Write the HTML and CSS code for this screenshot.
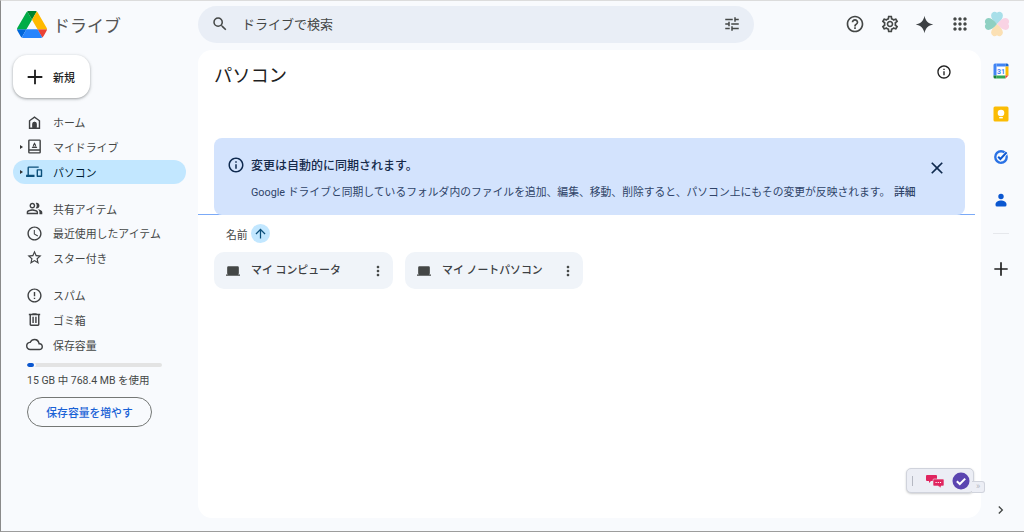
FILE: index.html
```html
<!DOCTYPE html>
<html lang="ja">
<head>
<meta charset="utf-8">
<title>ドライブ</title>
<link rel="stylesheet" href="styles.css">
</head>
<body>
<div class="app">
  <header class="topbar">
    <div class="brand">
      <svg class="logo" viewBox="0 0 87.3 78" width="30" height="27"><path d="m6.6 66.85 3.85 6.65c.8 1.4 1.95 2.5 3.3 3.3l13.75-23.8h-27.5c0 1.55.4 3.1 1.2 4.5z" fill="#0066da"/><path d="m43.65 25-13.75-23.8c-1.35.8-2.5 1.9-3.3 3.3l-25.4 44a9.06 9.06 0 0 0 -1.2 4.5h27.5z" fill="#00ac47"/><path d="m73.55 76.8c1.35-.8 2.5-1.9 3.3-3.3l1.6-2.75 7.65-13.25c.8-1.4 1.2-2.95 1.2-4.5h-27.5l5.85 11.5z" fill="#ea4335"/><path d="m43.65 25 13.75-23.8c-1.35-.8-2.9-1.2-4.5-1.2h-18.5c-1.6 0-3.15.45-4.5 1.2z" fill="#00832d"/><path d="m59.8 53h-32.3l-13.75 23.8c1.35.8 2.9 1.2 4.5 1.2h50.8c1.6 0 3.15-.45 4.5-1.2z" fill="#2684fc"/><path d="m73.4 26.5-12.7-22c-.8-1.4-1.95-2.5-3.3-3.3l-13.75 23.8 16.15 28h27.45c0-1.55-.4-3.1-1.2-4.5z" fill="#ffba00"/></svg>
      <span class="brand-name">ドライブ</span>
    </div>
    <div class="search">
      <svg class="ic18" viewBox="0 0 24 24"><path d="M15.5 14h-.79l-.28-.27A6.47 6.47 0 0 0 16 9.5 6.5 6.5 0 1 0 9.5 16c1.61 0 3.09-.59 4.23-1.57l.27.28v.79l5 4.99L20.49 19l-4.99-5zm-6 0C7.01 14 5 11.99 5 9.5S7.01 5 9.5 5 14 7.01 14 9.5 11.99 14 9.5 14z"/></svg>
      <span class="search-text">ドライブで検索</span>
      <svg class="ic18 tune" viewBox="0 0 24 24"><path d="M3 17v2h6v-2H3zM3 5v2h10V5H3zm10 16v-2h8v-2h-8v-2h-2v6h2zM7 9v2H3v2h4v2h2V9H7zm14 4v-2H11v2h10zm-6-4h2V7h4V5h-4V3h-2v6z"/></svg>
    </div>
    <div class="top-actions">
      <svg class="ic20" viewBox="0 0 24 24"><path d="M11 18h2v-2h-2v2zm1-16C6.48 2 2 6.48 2 12s4.48 10 10 10 10-4.480 10-10S17.520 2 12 2zm0 18c-4.410 0-8-3.590-8-8s3.590-8 8-8 8 3.590 8 8-3.590 8-8 8zm0-14c-2.210 0-4 1.790-4 4h2c0-1.100.9-2 2-2s2 .9 2 2c0 2-3 1.750-3 5h2c0-2.250 3-2.500 3-5 0-2.210-1.790-4-4-4z"/></svg>
      <svg class="ic20" viewBox="0 0 24 24"><path d="M19.43 12.98c.04-.32.07-.64.07-.98s-.03-.66-.07-.98l2.110-1.650c.19-.15.24-.42.12-.64l-2-3.460c-.12-.22-.39-.3-.61-.22l-2.490 1c-.52-.4-1.080-.73-1.690-.98l-.38-2.650A.49.49 0 0 0 14 2h-4c-.25 0-.46.18-.49.42l-.38 2.650c-.61.25-1.170.59-1.690.98l-2.490-1c-.23-.09-.49 0-.61.22l-2 3.460c-.13.22-.07.49.12.64l2.110 1.650c-.04.32-.07.65-.07.98s.03.66.07.98l-2.110 1.650c-.19.15-.24.42-.12.64l2 3.460c.12.22.39.3.61.22l2.490-1c.52.4 1.080.73 1.690.98l.38 2.650c.03.24.24.42.49.42h4c.25 0 .46-.18.49-.42l.38-2.650c.61-.25 1.170-.59 1.690-.98l2.490 1c.23.09.49 0 .61-.22l2-3.460c.12-.22.07-.49-.12-.64l-2.110-1.650zM17.450 11.270c.04.31.05.52.05.73s-.02.43-.05.73l-.14 1.130.89.7 1.080.84-.7 1.210-1.270-.51-1.040-.42-.9.68c-.43.32-.84.56-1.250.73l-1.060.43-.16 1.130-.2 1.350h-1.400l-.19-1.350-.16-1.130-1.060-.43c-.43-.18-.83-.41-1.230-.71l-.91-.7-1.060.43-1.270.51-.7-1.210 1.080-.84.89-.7-.14-1.130c-.03-.31-.05-.54-.05-.74s.02-.43.05-.73l.14-1.130-.89-.7-1.080-.84.7-1.210 1.270.51 1.040.42.9-.68c.43-.32.84-.56 1.250-.73l1.060-.43.16-1.130.2-1.350h1.390l.19 1.350.16 1.130 1.060.43c.43.18.83.41 1.230.71l.91.7 1.060-.43 1.270-.51.7 1.210-1.070.85-.89.7.14 1.130zM12 8c-2.210 0-4 1.790-4 4s1.790 4 4 4 4-1.790 4-4-1.790-4-4-4zm0 6c-1.100 0-2-.9-2-2s.9-2 2-2 2 .9 2 2-.9 2-2 2z"/></svg>
      <svg class="ic20 gem" viewBox="0 0 24 24"><path d="M12 2c.9 5.600 4.400 9.100 10 10-5.600.9-9.100 4.400-10 10-.9-5.600-4.400-9.100-10-10 5.600-.9 9.100-4.400 10-10z"/></svg>
      <svg class="ic20" viewBox="0 0 24 24"><path d="M6 8c1.100 0 2-.9 2-2s-.9-2-2-2-2 .9-2 2 .9 2 2 2zm6 12c1.100 0 2-.9 2-2s-.9-2-2-2-2 .9-2 2 .9 2 2 2zm-6 0c1.100 0 2-.9 2-2s-.9-2-2-2-2 .9-2 2 .9 2 2 2zm0-6c1.100 0 2-.9 2-2s-.9-2-2-2-2 .9-2 2 .9 2 2 2zm6 0c1.100 0 2-.9 2-2s-.9-2-2-2-2 .9-2 2 .9 2 2 2zm4-8c0 1.100.9 2 2 2s2-.9 2-2-.9-2-2-2-2 .9-2 2zm-4 2c1.100 0 2-.9 2-2s-.9-2-2-2-2 .9-2 2 .9 2 2 2zm6 6c1.100 0 2-.9 2-2s-.9-2-2-2-2 .9-2 2 .9 2 2 2zm0 6c1.100 0 2-.9 2-2s-.9-2-2-2-2 .9-2 2 .9 2 2 2z"/></svg>
      <svg class="avatar" viewBox="2 2 22 22" width="26" height="26"><path d="M13 13C9.500 10 8 8 8 5.500A3 3 0 0 1 13 3.500 3 3 0 0 1 18 5.500C18 8 16.500 10 13 13z" fill="#a8dfe9"/><path d="M13 13C9.500 10 8 8 8 5.500A3 3 0 0 1 13 3.500 3 3 0 0 1 18 5.500C18 8 16.500 10 13 13z" fill="#f9d3e4" transform="rotate(90 13 13)"/><path d="M13 13C9.500 10 8 8 8 5.500A3 3 0 0 1 13 3.500 3 3 0 0 1 18 5.500C18 8 16.500 10 13 13z" fill="#fbe0b4" transform="rotate(180 13 13)"/><path d="M13 13C9.500 10 8 8 8 5.500A3 3 0 0 1 13 3.500 3 3 0 0 1 18 5.500C18 8 16.500 10 13 13z" fill="#8fd0c2" transform="rotate(270 13 13)"/></svg>
    </div>
  </header>

  <div class="body">
    <aside class="sidebar">
      <button class="new-btn">
        <svg class="ic22" viewBox="0 0 24 24"><path d="M20 13h-7v7h-2v-7H4v-2h7V4h2v7h7z"/></svg>
        <span>新規</span>
      </button>
      <nav class="nav-group first">
        <div class="nav-item"><svg viewBox="0 0 24 24"><path fill-rule="evenodd" d="M12 3 4 9v12h16V9l-8-6zm6 16h-3v-5a3 3 0 0 0-6 0v5H6v-9l6-4.500 6 4.500v9z"/><path d="M9 14a3 3 0 0 1 6 0v5H9z"/></svg><span>ホーム</span></div>
        <div class="nav-item"><i class="caret"></i><svg viewBox="0 0 24 24"><path d="M19 2H5a2 2 0 0 0-2 2v16a2 2 0 0 0 2 2h14a2 2 0 0 0 2-2V4a2 2 0 0 0-2-2zm0 18H5v-2h14v2zm0-4H5V4h14v12zM8 14h8l-1.200-2H9.200L8 14zm4-8-2.400 4.200 1 1.800L12 9.500l1.400 2.500 1-1.800L12 6z"/></svg><span>マイドライブ</span></div>
        <div class="nav-item active"><i class="caret"></i><svg class="pc" viewBox="0 0 24 20"><path d="M4 4h14V2H4a2 2 0 0 0-2 2v10H0v3h12v-3H4V4zm18 2h-6a1 1 0 0 0-1 1v9a1 1 0 0 0 1 1h6a1 1 0 0 0 1-1V7a1 1 0 0 0-1-1zm-1 9h-4V8h4v7z"/></svg><span>パソコン</span></div>
      </nav>
      <nav class="nav-group shared">
        <div class="nav-item"><svg viewBox="0 0 24 24"><path d="M16.670 13.130C18.040 14.060 19 15.320 19 17v3h4v-3c0-2.180-3.570-3.470-6.330-3.870zM15 12c2.210 0 4-1.790 4-4s-1.790-4-4-4c-.47 0-.91.1-1.330.24a5.980 5.980 0 0 1 0 7.520c.42.14.86.24 1.330.24zM9 12c2.210 0 4-1.790 4-4s-1.790-4-4-4-4 1.790-4 4 1.790 4 4 4zm0-6c1.100 0 2 .9 2 2s-.9 2-2 2-2-.9-2-2 .9-2 2-2zM9 13c-2.670 0-8 1.340-8 4v3h16v-3c0-2.660-5.330-4-8-4zm6 5H3v-.99C3.200 16.290 6.300 15 9 15s5.800 1.290 6 2v1z"/></svg><span>共有アイテム</span></div>
        <div class="nav-item"><svg viewBox="0 0 24 24"><path d="M11.990 2C6.470 2 2 6.480 2 12s4.470 10 9.990 10C17.520 22 22 17.520 22 12S17.520 2 11.990 2zM12 20c-4.420 0-8-3.580-8-8s3.580-8 8-8 8 3.580 8 8-3.580 8-8 8zm.5-13H11v6l5.250 3.150.75-1.230-4.500-2.670V7z"/></svg><span>最近使用したアイテム</span></div>
        <div class="nav-item"><svg viewBox="0 0 24 24"><path d="m22 9.240-7.190-.62L12 2 9.190 8.630 2 9.240l5.460 4.730L5.820 21 12 17.270 18.180 21l-1.630-7.030L22 9.240zM12 15.400l-3.760 2.270 1-4.280-3.320-2.880 4.380-.38L12 6.100l1.710 4.040 4.380.38-3.320 2.880 1 4.280L12 15.400z"/></svg><span>スター付き</span></div>
      </nav>
      <nav class="nav-group">
        <div class="nav-item"><svg viewBox="0 0 24 24"><path d="M11 15h2v2h-2zm0-8h2v6h-2zm.99-5C6.470 2 2 6.480 2 12s4.470 10 9.990 10C17.520 22 22 17.520 22 12S17.520 2 11.990 2zM12 20c-4.420 0-8-3.580-8-8s3.580-8 8-8 8 3.580 8 8-3.580 8-8 8z"/></svg><span>スパム</span></div>
        <div class="nav-item"><svg viewBox="0 0 24 24"><path d="M15 4V3H9v1H4v2h1v13c0 1.100.9 2 2 2h10c1.100 0 2-.9 2-2V6h1V4h-5zm2 15H7V6h10v13zM9 8h2v9H9zm4 0h2v9h-2z"/></svg><span>ゴミ箱</span></div>
        <div class="nav-item"><svg viewBox="0 0 24 24"><path d="M19.350 10.040A7.490 7.490 0 0 0 12 4C9.110 4 6.600 5.640 5.350 8.040A5.994 5.994 0 0 0 0 14c0 3.310 2.690 6 6 6h13c2.760 0 5-2.240 5-5 0-2.640-2.050-4.780-4.650-4.960zM19 18H6c-2.210 0-4-1.790-4-4 0-2.050 1.530-3.760 3.560-3.970l1.070-.11.500-.95A5.469 5.469 0 0 1 12 6c2.620 0 4.880 1.860 5.390 4.430l.3 1.500 1.530.11A2.980 2.980 0 0 1 22 15c0 1.650-1.350 3-3 3z"/></svg><span>保存容量</span></div>
      </nav>
      <div class="storage">
        <div class="storage-track"><div class="storage-fill" style="width:7px"></div></div>
        <div class="storage-text">15 GB 中 768.4 MB を使用</div>
        <button class="more-btn">保存容量を増やす</button>
      </div>
    </aside>

    <main class="panel">
      <div class="panel-head">
        <h1>パソコン</h1>
        <svg class="ic16" viewBox="0 0 24 24"><path d="M11 7h2v2h-2zm0 4h2v6h-2zm1-9C6.480 2 2 6.480 2 12s4.480 10 10 10 10-4.480 10-10S17.520 2 12 2zm0 18c-4.410 0-8-3.590-8-8s3.590-8 8-8 8 3.590 8 8-3.590 8-8 8z"/></svg>
      </div>
      <div class="banner-wrap">
        <section class="banner">
          <div class="banner-title">
            <svg class="ic18 navy" viewBox="0 0 24 24"><path d="M11 7h2v2h-2zm0 4h2v6h-2zm1-9C6.480 2 2 6.480 2 12s4.480 10 10 10 10-4.480 10-10S17.520 2 12 2zm0 18c-4.410 0-8-3.590-8-8s3.590-8 8-8 8 3.590 8 8-3.590 8-8 8z"/></svg>
            <strong>変更は自動的に同期されます。</strong>
            <svg class="ic20 navy close" viewBox="0 0 24 24"><path d="M19 6.410 17.590 5 12 10.590 6.410 5 5 6.410 10.590 12 5 17.590 6.410 19 12 13.410 17.590 19 19 17.590 13.410 12z"/></svg>
          </div>
          <p>Google ドライブと同期しているフォルダ内のファイルを追加、編集、移動、削除すると、パソコン上にもその変更が反映されます。 <span class="detail">詳細</span></p>
        </section>
      </div>
      <div class="sort">
        <span>名前</span>
        <span class="sort-btn"><svg viewBox="0 0 24 24" width="15" height="15"><path d="M4 12l1.410 1.410L11 7.830V20h2V7.830l5.580 5.590L20 12l-8-8-8 8z"/></svg></span>
      </div>
      <div class="cards">
        <div class="card card-a">
          <svg class="ic14" viewBox="0 0 24 24"><path d="M20 18a2 2 0 0 0 2-2V6a2 2 0 0 0-2-2H4a2 2 0 0 0-2 2v10a2 2 0 0 0 2 2H0v2h24v-2h-4z"/></svg>
          <span class="card-name">マイ コンピュータ</span>
          <svg class="ic16 dots" viewBox="0 0 24 24"><path d="M12 8c1.100 0 2-.9 2-2s-.9-2-2-2-2 .9-2 2 .9 2 2 2zm0 2c-1.100 0-2 .9-2 2s.9 2 2 2 2-.9 2-2-.9-2-2-2zm0 6c-1.100 0-2 .9-2 2s.9 2 2 2 2-.9 2-2-.9-2-2-2z"/></svg>
        </div>
        <div class="card card-b">
          <svg class="ic14" viewBox="0 0 24 24"><path d="M20 18a2 2 0 0 0 2-2V6a2 2 0 0 0-2-2H4a2 2 0 0 0-2 2v10a2 2 0 0 0 2 2H0v2h24v-2h-4z"/></svg>
          <span class="card-name">マイ ノートパソコン</span>
          <svg class="ic16 dots" viewBox="0 0 24 24"><path d="M12 8c1.100 0 2-.9 2-2s-.9-2-2-2-2 .9-2 2 .9 2 2 2zm0 2c-1.100 0-2 .9-2 2s.9 2 2 2 2-.9 2-2-.9-2-2-2zm0 6c-1.100 0-2 .9-2 2s.9 2 2 2 2-.9 2-2-.9-2-2-2z"/></svg>
        </div>
      </div>
    </main>

    <aside class="rail">
      <svg class="rail-ic" viewBox="0 0 16 16" width="16" height="16"><rect x=".5" y=".5" width="15" height="15" rx="1.500" fill="#fff"/><path d="M3.500.5h9v3h-9z" fill="#4285f4"/><path d="M.5 2A1.500 1.500 0 0 1 2 .5h1.500v12h-3z" fill="#4285f4"/><path d="M12.500.5H14A1.500 1.500 0 0 1 15.500 2v1.500h-3z" fill="#1967d2"/><path d="M12.500 3.500h3v9h-3z" fill="#fbbc04"/><path d="M3.500 12.500h9v3h-9z" fill="#34a853"/><path d="M.5 12.500h3v3H2A1.500 1.500 0 0 1 .5 14z" fill="#188038"/><path d="M12.500 12.500h3l-3 3z" fill="#ea4335"/><text x="8" y="10.500" class="cal-text">31</text></svg>
      <svg class="rail-ic" viewBox="0 0 16 16" width="16" height="16"><rect x=".5" y=".5" width="15" height="15" rx="1.500" fill="#fbbc04"/><circle cx="8" cy="7" r="3.300" fill="#fff"/><rect x="6.200" y="11" width="3.600" height="1.400" fill="#fff"/></svg>
      <svg class="rail-ic" viewBox="0 0 16 16" width="16" height="16"><circle cx="8" cy="8" r="5.700" fill="none" stroke="#2a72e5" stroke-width="2.400"/><path d="m4.800 7.600 2.600 2.600 6-6.400" fill="none" stroke="#f8fafd" stroke-width="3.400"/><path d="m5.200 7.800 2.200 2.200 6.200-6.600" fill="none" stroke="#0b57d0" stroke-width="2"/></svg>
      <svg class="rail-ic" viewBox="0 0 16 16" width="16" height="16"><circle cx="8" cy="4.500" r="2.700" fill="#0b57d0"/><path d="M2.500 12.500C2.500 9.800 5.500 8.500 8 8.500s5.500 1.300 5.500 4v.5a1.500 1.500 0 0 1-1.500 1.500H4A1.500 1.500 0 0 1 2.500 13z" fill="#0b57d0"/></svg>
      <div class="rail-sep"></div>
      <svg class="ic20 rail-plus" viewBox="0 0 24 24"><path d="M20 13h-7v7h-2v-7H4v-2h7V4h2v7h7z"/></svg>
      <svg class="ic16 rail-chev" viewBox="0 0 24 24"><path d="M9.410 6 8 7.410 12.580 12 8 16.590 9.410 18l6-6z"/></svg>
    </aside>

    <div class="float-widget">
      <i class="fw-bar"></i>
      <svg viewBox="0 0 18 14" width="18" height="14"><path d="M1 1h9a1 1 0 0 1 1 1v4a1 1 0 0 1-1 1H5L3 9V7H1a1 1 0 0 1-1-1V2a1 1 0 0 1 1-1z" fill="#e0255f"/><path d="M8 5h9a1 1 0 0 1 1 1v5a1 1 0 0 1-1 1h-2v2l-3-2H8a1 1 0 0 1-1-1V6a1 1 0 0 1 1-1z" fill="#e0255f" stroke="#eceef5" stroke-width=".6"/><path d="M9.500 8.500h6" stroke="#fff" stroke-width="1.200" stroke-dasharray="1.200 1"/></svg>
      <svg viewBox="0 0 18 18" width="18" height="18"><circle cx="9" cy="9" r="8.500" fill="#5b45b0"/><path d="m4.800 9.200 3 2.800 5.400-5.400" fill="none" stroke="#fff" stroke-width="2"/></svg>
      <span class="fw-tab">»</span>
    </div>
  </div>
</div>
</body>
</html>
```
FILE: styles.css
```css
* { box-sizing: border-box; }
html, body { margin: 0; height: 100%; overflow: hidden; }
body {
  font-family: Roboto, "Noto Sans CJK JP", sans-serif;
  color: #444746;
  background: #f8fafd;
}
svg { fill: currentColor; flex: none; display: block; }
.ic14 { width: 14px; height: 14px; }
.ic16 { width: 16px; height: 16px; }
.ic18 { width: 18px; height: 18px; }
.ic20 { width: 20px; height: 20px; }
.ic22 { width: 22px; height: 22px; }
.navy { color: #0f2a4f; }

.app {
  width: 1024px;
  height: 532px;
  display: flex;
  flex-direction: column;
  border-top: 1px solid #dcdcdc;
  border-left: 1px solid #8a8a8a;
  border-bottom: 1px solid #9c9c9c;
}

/* Top bar */
.topbar {
  height: 49px;
  display: flex;
  align-items: center;
  flex: none;
  padding-bottom: 3px;
}
.brand { width: 197px; display: flex; align-items: center; padding-left: 16px; gap: 6px; }
.brand-name { font-size: 17px; color: #555; }
.search {
  width: 556px;
  height: 37px;
  border-radius: 19px;
  background: #e9eef6;
  display: flex;
  align-items: center;
  padding: 0 13px;
  color: #444746;
}
.search-text { flex: 1; font-size: 13px; margin-left: 13px; padding-bottom: 2px; color: #444746; }
.top-actions {
  flex: 1;
  display: flex;
  align-items: center;
  padding-left: 91px;
  gap: 14.700px;
  color: #444746;
}
.gem { width: 21px; height: 21px; color: #3c4043; }
.avatar { margin-left: -1px; }

.body { flex: 1; display: flex; position: relative; min-height: 0; }

/* Sidebar */
.sidebar { width: 197px; flex: none; padding: 5px 12px 0; }
.new-btn {
  width: 77px;
  height: 43px;
  border: 0;
  border-radius: 14px;
  background: #fff;
  box-shadow: 0 1px 2px rgba(60,64,67,.3), 0 1px 3px 1px rgba(60,64,67,.15);
  display: flex;
  align-items: center;
  gap: 7px;
  padding: 0 0 0 11px;
  font: 500 11px Roboto, "Noto Sans CJK JP", sans-serif;
  color: #1f1f1f;
}
.new-btn svg { color: #1f1f1f; width: 22px; height: 22px; }
.nav-group { margin-top: 13px; }
.nav-group.first { margin-top: 12px; }
.nav-group.shared { margin-top: 12px; }
.nav-item {
  position: relative;
  width: 173px;
  height: 24.600px;
  border-radius: 13px;
  display: flex;
  align-items: center;
  font-size: 10.900px;
  color: #444746;
  padding-left: 13px;
}
.nav-item svg { margin-right: 10px; color: #3f4143; width: 17px; height: 17px; }
.nav-item svg.pc { width: 17px; height: 14px; }
.nav-item.active { background: #c2e7ff; color: #001d35; margin-top: .5px; }
.nav-item.active svg { color: #0b4f7a; }
.caret {
  position: absolute;
  left: 7px;
  top: 10px;
  width: 0;
  height: 0;
  border-left: 3px solid #333;
  border-top: 2.500px solid transparent;
  border-bottom: 2.500px solid transparent;
}
.storage { padding: 6px 0 0 14px; }
.storage-track { width: 135px; height: 4px; border-radius: 2px; background: #e3e3e3; overflow: hidden; }
.storage-fill { height: 4px; background: #0b57d0; border-radius: 2px; box-shadow: 2px 0 0 #f8fafd; }
.storage-text { font-size: 10.500px; color: #444746; margin-top: 7px; line-height: 14px; }
.more-btn {
  margin-top: 9px;
  width: 125px;
  height: 30px;
  border-radius: 15px;
  border: 1px solid #747775;
  background: transparent;
  color: #1a62d6;
  font: 500 10.800px Roboto, "Noto Sans CJK JP", sans-serif;
  padding: 0;
}

/* Main panel */
.panel {
  width: 783px;
  height: 468px;
  flex: none;
  background: #fff;
  border-radius: 14px;
  padding: 0;
}
.panel-head {
  display: flex;
  justify-content: space-between;
  padding: 12px 29px 0 16px;
  height: 88px;
  align-items: flex-start;
}
.panel-head h1 { margin: 0; font-size: 18.300px; font-weight: 400; color: #1f1f1f; line-height: 28px; }
.panel-head svg { margin-top: 2px; color: #1f1f1f; }
.banner-wrap { width: 777px; padding-left: 16px; border-bottom: 1px solid #7baaf7; height: 77px; }
.banner {
  width: 751px;
  height: 77px;
  background: #d3e3fd;
  border-radius: 8px;
  padding: 18px 16px 0 13px;
  color: #0f2a4f;
  position: relative;
}
.banner-title { display: flex; align-items: center; gap: 6px; height: 18px; font-size: 12px; }
.banner-title strong { font-weight: 500; flex: 1; color: #152a4a; padding-bottom: 2px; }
.banner .close { margin-right: 2px; margin-top: 5px; color: #0f2a4f; }
.banner p { margin: 12px 0 0 24px; font-size: 10.800px; line-height: 14px; color: #2f4368; white-space: nowrap; }
.detail { font-weight: 500; margin-left: 1px; }
.sort { display: flex; align-items: center; gap: 3px; height: 37px; padding: 0 0 0 28px; font-size: 10.800px; color: #444746; }
.sort-btn { width: 19px; height: 19px; border-radius: 50%; background: #c2e7ff; color: #0b4f7a; display: flex; align-items: center; justify-content: center; }
.cards { display: flex; padding-left: 16px; gap: 12px; }
.card {
  height: 37px;
  border-radius: 10px;
  background: #f0f4f9;
  display: flex;
  align-items: center;
  padding: 0 7px 0 12px;
  gap: 11px;
  font-size: 10.900px;
  font-weight: 500;
  color: #3c4043;
}
.card-a { width: 179px; }
.card-b { width: 178px; }
.card-name { flex: 1; white-space: nowrap; padding-bottom: 3px; }
.card svg { color: #444746; }

/* Right rail */
.rail {
  flex: 1;
  display: flex;
  flex-direction: column;
  align-items: center;
  padding: 13px 4px 0 0;
  gap: 27px;
}
.rail-ic { width: 16px; height: 16px; }
.cal-text { font: 700 7px Roboto, sans-serif; fill: #4285f4; text-anchor: middle; }
.rail-sep { width: 16px; height: 1px; background: #e6e8ec; margin-top: -2px; margin-bottom: -1px; }
.rail-plus { color: #1f1f1f; margin-top: -1px; }
.rail-chev { margin-top: 196px; color: #444746; }

/* Floating widget */
.float-widget {
  position: absolute;
  left: 905px;
  top: 418px;
  width: 68px;
  height: 25px;
  background: #eceef5;
  border: 1px solid #d0d3dc;
  border-radius: 5px;
  box-shadow: 0 1px 2px rgba(60,64,67,.25);
  display: flex;
  align-items: center;
  padding-left: 5px;
  gap: 0;
}
.float-widget svg:first-of-type { margin-left: 13px; margin-right: 8px; }
.fw-bar { width: 1px; height: 10px; background: #b5b8c2; }
.fw-tab {
  position: absolute;
  left: 65px;
  top: 12px;
  width: 13px;
  height: 12px;
  background: #eceef5;
  border: 1px solid #d0d3dc;
  border-left: 0;
  border-radius: 0 3px 3px 0;
  font-size: 9px;
  line-height: 9px;
  color: #b5b8c2;
  text-align: center;
}
```
